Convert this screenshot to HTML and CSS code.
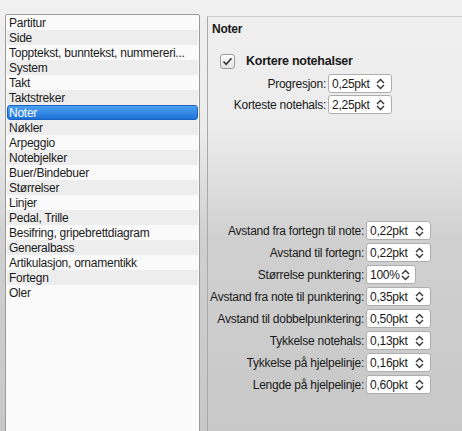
FILE: index.html
```html
<!doctype html>
<html>
	<head>
		<meta charset="utf-8">
		<title>Innstillinger</title>
		<link rel="stylesheet" href="styles.css">
	</head>
	<body>
		<div class="window">
			<ul class="pages">
				<li>Partitur</li>
				<li>Side</li>
				<li>Topptekst, bunntekst, nummereri...</li>
				<li>System</li>
				<li>Takt</li>
				<li>Taktstreker</li>
				<li class="selected">Noter</li>
				<li>Nøkler</li>
				<li>Arpeggio</li>
				<li>Notebjelker</li>
				<li>Buer/Bindebuer</li>
				<li>Størrelser</li>
				<li>Linjer</li>
				<li>Pedal, Trille</li>
				<li>Besifring, gripebrettdiagram</li>
				<li>Generalbass</li>
				<li>Artikulasjon, ornamentikk</li>
				<li>Fortegn</li>
				<li>Oler</li>
			</ul>
			<div class="panel">
				<div class="panel-title">Noter</div>
				<label class="checkrow">
					<span class="check">
						<svg width="15" height="15" viewBox="0 0 15 15"><path d="M3.5 7.5 L6.2 10.3 L11.5 4.2" fill="none" stroke="#333" stroke-width="1.6"/></svg>
					</span>
					<span>Kortere notehalser</span>
				</label>
				<div class="form form-short">
					<span class="lbl">Progresjon:</span>
					<div class="spin"><span>0,25pkt</span><svg width="9" height="12" viewBox="0 0 9 12"><path d="M1 5 L4.5 1.5 L8 5 M1 7 L4.5 10.5 L8 7" fill="none" stroke="#333" stroke-width="1.4"/></svg></div>
					<span class="lbl">Korteste notehals:</span>
					<div class="spin"><span>2,25pkt</span><svg width="9" height="12" viewBox="0 0 9 12"><path d="M1 5 L4.5 1.5 L8 5 M1 7 L4.5 10.5 L8 7" fill="none" stroke="#333" stroke-width="1.4"/></svg></div>
				</div>
				<div class="form form-main">
					<span class="lbl">Avstand fra fortegn til note:</span>
					<div class="spin"><span>0,22pkt</span><svg width="9" height="12" viewBox="0 0 9 12"><path d="M1 5 L4.5 1.5 L8 5 M1 7 L4.5 10.5 L8 7" fill="none" stroke="#333" stroke-width="1.4"/></svg></div>
					<span class="lbl">Avstand til fortegn:</span>
					<div class="spin"><span>0,22pkt</span><svg width="9" height="12" viewBox="0 0 9 12"><path d="M1 5 L4.5 1.5 L8 5 M1 7 L4.5 10.5 L8 7" fill="none" stroke="#333" stroke-width="1.4"/></svg></div>
					<span class="lbl">Størrelse punktering:</span>
					<div class="spin spin-small"><span>100%</span><svg width="9" height="12" viewBox="0 0 9 12"><path d="M1 5 L4.5 1.5 L8 5 M1 7 L4.5 10.5 L8 7" fill="none" stroke="#333" stroke-width="1.4"/></svg></div>
					<span class="lbl">Avstand fra note til punktering:</span>
					<div class="spin"><span>0,35pkt</span><svg width="9" height="12" viewBox="0 0 9 12"><path d="M1 5 L4.5 1.5 L8 5 M1 7 L4.5 10.5 L8 7" fill="none" stroke="#333" stroke-width="1.4"/></svg></div>
					<span class="lbl">Avstand til dobbelpunktering:</span>
					<div class="spin"><span>0,50pkt</span><svg width="9" height="12" viewBox="0 0 9 12"><path d="M1 5 L4.5 1.5 L8 5 M1 7 L4.5 10.5 L8 7" fill="none" stroke="#333" stroke-width="1.4"/></svg></div>
					<span class="lbl">Tykkelse notehals:</span>
					<div class="spin"><span>0,13pkt</span><svg width="9" height="12" viewBox="0 0 9 12"><path d="M1 5 L4.5 1.5 L8 5 M1 7 L4.5 10.5 L8 7" fill="none" stroke="#333" stroke-width="1.4"/></svg></div>
					<span class="lbl">Tykkelse på hjelpelinje:</span>
					<div class="spin"><span>0,16pkt</span><svg width="9" height="12" viewBox="0 0 9 12"><path d="M1 5 L4.5 1.5 L8 5 M1 7 L4.5 10.5 L8 7" fill="none" stroke="#333" stroke-width="1.4"/></svg></div>
					<span class="lbl">Lengde på hjelpelinje:</span>
					<div class="spin"><span>0,60pkt</span><svg width="9" height="12" viewBox="0 0 9 12"><path d="M1 5 L4.5 1.5 L8 5 M1 7 L4.5 10.5 L8 7" fill="none" stroke="#333" stroke-width="1.4"/></svg></div>
				</div>
			</div>
		</div>
	</body>
</html>
```

FILE: styles.css
```css
* {
	margin: 0;
	padding: 0;
	box-sizing: border-box;
}
html, body {
	height: 100%;
	overflow: hidden;
}
body {
	font-family: "Liberation Sans", Arial, sans-serif;
	font-size: 12px;
	letter-spacing: -0.25px;
	color: #1a1a1a;
	background: linear-gradient(#f0f0f0 0, #ececec 30%, #d0d0d0 55%, #c8c8c8 100%);
}
.window {
	display: flex;
	align-items: flex-start;
	gap: 7px;
	padding: 14px 0 0 5px;
}
.pages {
	list-style: none;
	width: 195px;
	height: 440px;
	flex: none;
	background-color: #fafafa;
	border: 1px solid #9a9a9a;
	border-radius: 2px;
	padding: 0 1px;
}
.pages li {
	height: 15px;
	line-height: 16px;
	padding-left: 2px;
	white-space: nowrap;
}
.pages li:nth-child(even) {
	background-color: #ededed;
}
.pages li.selected {
	color: #fff;
	background: linear-gradient(#4aa0f2, #1f72d6);
	border: 1px solid #1861c0;
	border-radius: 3px;
	line-height: 14px;
	padding-left: 1px;
}
.panel {
	flex: 1;
	height: 440px;
	margin-top: 2px;
	border-top: 1px solid #cfcfcf;
	border-left: 1px solid #a9a9a9;
	padding: 5px 0 0 4px;
}
.panel-title {
	font-weight: bold;
	line-height: 15px;
}
.checkrow {
	display: flex;
	align-items: center;
	gap: 11px;
	margin: 16px 0 0 8px;
	height: 16px;
	font-weight: bold;
	font-size: 12.5px;
}
.check {
	width: 15px;
	height: 15px;
	display: block;
	border: 1px solid #9c9c9c;
	border-radius: 3px;
	background: linear-gradient(#fdfdfd, #e2e2e2);
}
.check svg {
	display: block;
	margin: -1px;
}
.form {
	display: grid;
	column-gap: 2px;
	align-items: center;
	margin-left: -4px;
}
.form-short {
	grid-template-columns: 118px 64px;
	grid-auto-rows: 19px;
	row-gap: 2px;
	margin-top: 5px;
}
.form-main {
	grid-template-columns: 156px 65px;
	grid-auto-rows: 19px;
	row-gap: 3px;
	margin-top: 107px;
}
.lbl {
	text-align: right;
	white-space: nowrap;
}
.spin {
	height: 19px;
	display: flex;
	align-items: center;
	justify-content: space-between;
	background-color: #fff;
	border: 1px solid #adadad;
	border-radius: 3px;
	padding: 0 6px 0 3px;
}
.spin svg {
	display: block;
}
.spin-small {
	width: 50px;
	padding-right: 5px;
}
```
